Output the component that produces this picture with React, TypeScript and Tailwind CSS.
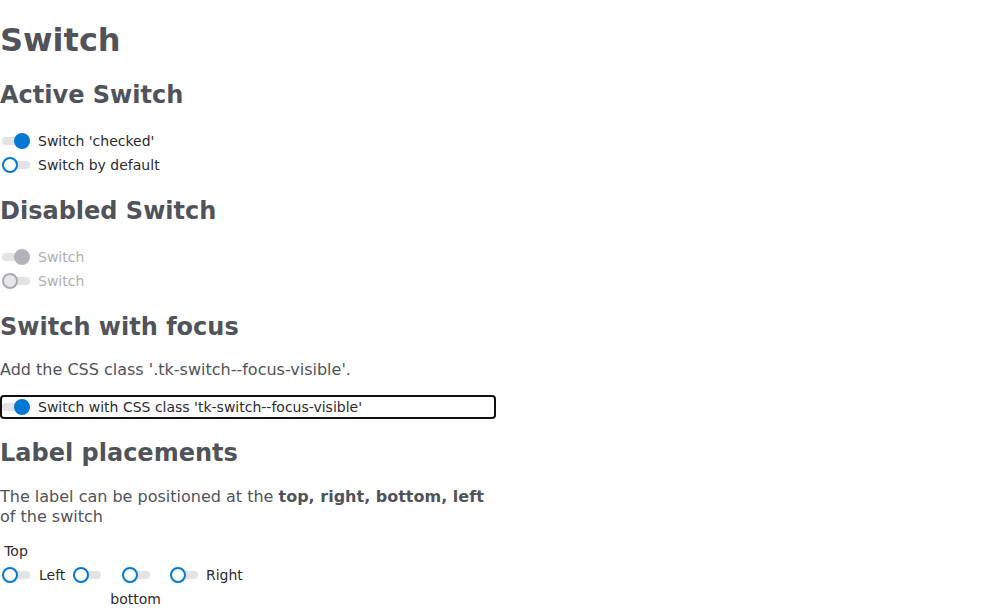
import React from "react";

type SwProps = { checked?: boolean; disabled?: boolean };

function Sw({ checked = false, disabled = false }: SwProps) {
  const thumb = disabled
    ? checked
      ? "bg-[#b1b4bb] border-2 border-[#b1b4bb]"
      : "bg-[#e8e8ea] border-2 border-[#a9abb1]"
    : checked
    ? "bg-[#0078d4] border-2 border-[#0078d4]"
    : "bg-white border-2 border-[#0078d4]";
  return (
    <span className="relative inline-flex h-[24px] w-[32px] shrink-0 items-center">
      <span className="absolute left-[2px] top-[8px] h-[8px] w-[28px] rounded-full bg-[#e3e3e6]" />
      <span
        className={
          "absolute top-[4px] h-[16px] w-[16px] rounded-full " +
          thumb +
          (checked ? " left-[14px]" : " left-[2px]")
        }
      />
    </span>
  );
}

function Row({
  checked,
  disabled,
  label,
  focus,
}: SwProps & { label: string; focus?: boolean }) {
  return (
    <div
      className={
        "flex h-[24px] items-center gap-[6px] " +
        (focus ? "rounded-[4px] outline-2 outline-[#111] -outline-offset-2" : "")
      }
    >
      <Sw checked={checked} disabled={disabled} />
      <span
        className={
          "text-[14px] leading-[20px] " +
          (disabled ? "text-[#acadb2]" : "text-[#2b2b2f]")
        }
      >
        {label}
      </span>
    </div>
  );
}

function H2({ children, mt, mb }: { children: React.ReactNode; mt: string; mb: string }) {
  return (
    <h2 className={"text-[24px] font-bold leading-[28px] text-[#50535a] " + mt + " " + mb}>
      {children}
    </h2>
  );
}

export default function App() {
  return (
    <div
      className="flex w-[496px] flex-col bg-white text-[#50535a]"
      style={{ fontFamily: '"DejaVu Sans", sans-serif' }}
    >
      <h1 className="mt-[21px] text-[32px] font-bold leading-[38px] text-[#50535a]">Switch</h1>

      <H2 mt="mt-[22px]" mb="mb-[20px]">Active Switch</H2>
      <div className="flex flex-col">
        <Row checked label="Switch 'checked'" />
        <Row label="Switch by default" />
      </div>

      <H2 mt="mt-[20px]" mb="mb-[20px]">Disabled Switch</H2>
      <div className="flex flex-col">
        <Row checked disabled label="Switch" />
        <Row disabled label="Switch" />
      </div>

      <H2 mt="mt-[20px]" mb="mb-[19px]">Switch with focus</H2>
      <p className="text-[16px] leading-[20px] text-[#50535a]">
        Add the CSS class '.tk-switch--focus-visible'.
      </p>
      <div className="mt-[15px]">
        <Row checked focus label="Switch with CSS class 'tk-switch--focus-visible'" />
      </div>

      <H2 mt="mt-[20px]" mb="mb-[20px]">Label placements</H2>
      <p className="text-[16px] leading-[20px] text-[#50535a]">
        The label can be positioned at the <b className="font-bold">top, right, bottom, left</b> of
        the switch
      </p>
      <div className="mt-[14px] flex items-start gap-[7px] text-[14px] leading-[20px] text-[#2b2b2f]">
        <div className="flex flex-col items-center gap-[2px]">
          <span>Top</span>
          <Sw />
        </div>
        <div className="mt-[22px] flex items-center gap-[6px]">
          <span>Left</span>
          <Sw />
        </div>
        <div className="mt-[22px] flex flex-col items-center gap-[2px]">
          <Sw />
          <span>bottom</span>
        </div>
        <div className="mt-[22px] flex items-center gap-[6px]">
          <Sw />
          <span>Right</span>
        </div>
      </div>
    </div>
  );
}
